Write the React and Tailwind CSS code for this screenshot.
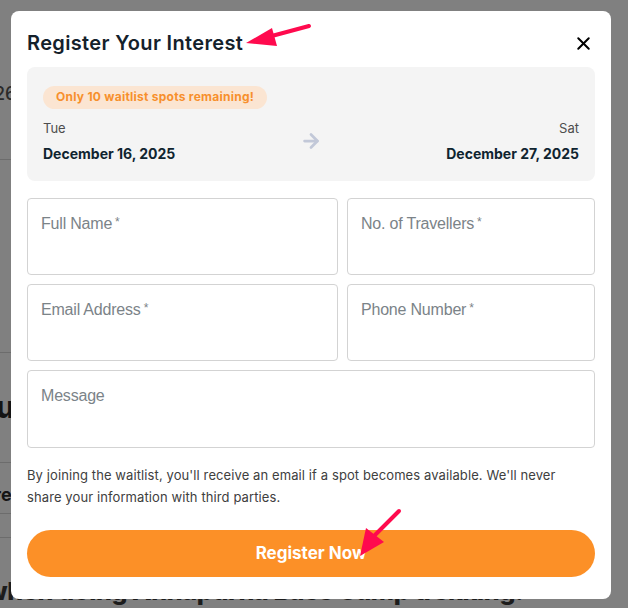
import React from 'react';
import { X, ArrowRight } from 'lucide-react';

const sans = { fontFamily: 'Inter, "Noto Sans", sans-serif' };

const Field = ({ label, required, className = '' }) => (
  <div className={`h-[77px] rounded-[4px] border border-[#d3d3d3] bg-white px-[13px] pt-[12px] ${className}`}>
    <span className="text-[16px] leading-[22px] text-[#7b8388] tracking-[-0.2px]" style={{ fontFamily: '"Liberation Sans", Arial, sans-serif' }}>
      {label}
      {required && <span className="ml-[3px] text-[12px] align-top">*</span>}
    </span>
  </div>
);

// pink annotation arrow
const Pointer = ({ x1, y1, x2, y2, head }) => (
  <svg className="absolute left-0 top-0 pointer-events-none" width="628" height="608" viewBox="0 0 628 608">
    <line x1={x1} y1={y1} x2={x2} y2={y2} stroke="#ff0a4e" strokeWidth="4" strokeLinecap="round" />
    <polygon points={head} fill="#ff0a4e" />
  </svg>
);

const Rule = ({ className }) => <div className={`h-px w-[20px] bg-[#6c6c6c] ${className}`} />;

export default function App() {
  return (
    <div className="relative w-[628px] h-[608px] overflow-hidden bg-[#808080]" style={sans}>
      {/* page behind the overlay */}
      <div className="flex flex-col text-[#141414] pt-[82px]">
        <div className="ml-[-6px] h-[24px] text-[18px] leading-[24px] font-medium text-[#2a2a2a]">26</div>
        <Rule className="mt-[53px]" />
        <Rule className="mt-[192px]" />
        <div className="ml-[-24px] mt-[36px] h-[36px] text-[30px] leading-[36px] font-extrabold">Su</div>
        <Rule className="mt-[37px]" />
        <div className="ml-[-6px] mt-[20px] h-[24px] text-[18px] leading-[24px] font-bold">re</div>
        <Rule className="mt-[6px]" />
        <Rule className="mt-[23px]" />
        <div className="ml-[-14px] mt-[37px] h-[32px] text-[25px] leading-[32px] font-extrabold tracking-[-0.3px] text-[#1c1c1c] whitespace-nowrap">
          when doing Annapurna Base Camp trekking:
        </div>
      </div>

      {/* modal */}
      <div className="absolute left-[11px] top-[11px] w-[600px] h-[588px] rounded-[8px] bg-white px-[16px] pt-[18px]">
        <div className="flex items-center justify-between h-[28px]">
          <h2 className="text-[20px] font-semibold text-[#14212b] tracking-[0.35px]">Register Your Interest</h2>
          <X size={21} strokeWidth={2.3} className="mr-[1px] text-black" />
        </div>

        <div className="mt-[10px] rounded-[8px] bg-[#f4f4f4] p-[16px] h-[114px]">
          <span className="inline-flex h-[23px] items-center rounded-full bg-[#fbe5d2] px-[13px] text-[12px] font-bold tracking-[0.25px] text-[#f7902d]">
            Only 10 waitlist spots remaining!
          </span>
          <div className="mt-[10px] flex items-center justify-between">
            <div>
              <div className="text-[13px] leading-[18px] text-[#4d4d4d]">Tue</div>
              <div className="mt-[8px] text-[14px] leading-[18px] font-bold text-[#0f2430]">December 16, 2025</div>
            </div>
            <ArrowRight size={22} strokeWidth={3} className="text-[#c2c8d8]" />
            <div className="text-right">
              <div className="text-[13px] leading-[18px] text-[#4d4d4d]">Sat</div>
              <div className="mt-[8px] text-[14px] leading-[18px] font-bold text-[#0f2430]">December 27, 2025</div>
            </div>
          </div>
        </div>

        <div className="mt-[17px] grid grid-cols-[311px_1fr] gap-[9px]">
          <Field label="Full Name" required />
          <Field label="No. of Travellers" required />
          <Field label="Email Address" required />
          <Field label="Phone Number" required />
          <Field label="Message" className="col-span-2 h-[78px]" />
        </div>

        <p className="mt-[16px] max-w-[545px] text-[13px] leading-[22px] tracking-[0.1px] text-[#404040]">
          By joining the waitlist, you'll receive an email if a spot becomes available. We'll never share your information with third parties.
        </p>

        <button className="mt-[22px] flex h-[47px] w-full items-center justify-center rounded-full bg-[#fc9027] text-[17px] font-bold tracking-[0px] text-white">
          Register Now
        </button>
      </div>

      {/* annotations */}
      <Pointer x1={309} y1={26} x2={268} y2={37} head="246,43 272,28 277,46" />
      <Pointer x1={399} y1={511} x2={375} y2={535} head="360,556 366,528 384,542" />
    </div>
  );
}
